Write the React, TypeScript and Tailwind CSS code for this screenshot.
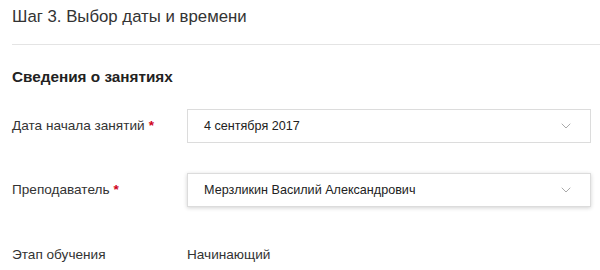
import { ChevronDown } from "lucide-react";

function Required() {
  return <span className="ml-1 font-bold text-[#d0021b]">*</span>;
}

function SelectBox({ value, focused }: { value: string; focused?: boolean }) {
  return (
    <div
      className={`flex h-[34px] w-[404px] items-center justify-between border border-[#dcdcdc] bg-white pl-4 pr-[16px] text-[12.6px] text-[#222] ${
        focused ? "shadow-[0_1px_4px_rgba(0,0,0,0.18)]" : ""
      }`}
    >
      <span>{value}</span>
      <ChevronDown className="h-4 w-4 text-[#aaa]" strokeWidth={1.5} />
    </div>
  );
}

export default function App() {
  return (
    <div className="h-[270px] w-[600px] overflow-hidden bg-white font-['Liberation_Sans',Arial,sans-serif] text-[#333]">
      <div className="pl-3">
        <h1 className="pt-[5px] text-[16.8px] leading-[24px] text-[#333]">
          Шаг 3. Выбор даты и времени
        </h1>
        <div className="mt-[15px] h-px bg-[#e4e4e4]" />
        <h2 className="mt-[22px] text-[15.3px] font-bold leading-[20px] text-[#222]">
          Сведения о занятиях
        </h2>

        <div className="mt-[22px] flex items-center">
          <div className="w-[175px] text-[13.6px]">
            Дата начала занятий
            <Required />
          </div>
          <SelectBox value="4 сентября 2017" />
        </div>

        <div className="mt-[30px] flex items-center">
          <div className="w-[175px] text-[13.6px]">
            Преподаватель
            <Required />
          </div>
          <SelectBox value="Мерзликин Василий Александрович" focused />
        </div>

        <div className="mt-[38px] flex items-center text-[13.6px]">
          <div className="w-[175px]">Этап обучения</div>
          <div>Начинающий</div>
        </div>
      </div>
    </div>
  );
}
